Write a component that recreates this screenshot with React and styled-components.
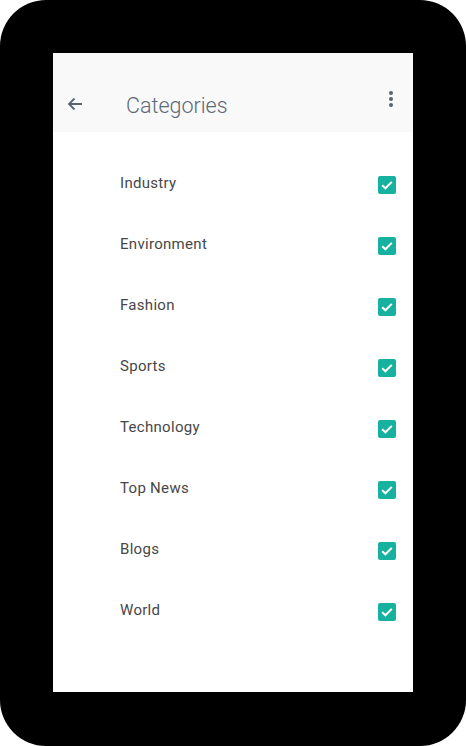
import React from "react";
import styled, { createGlobalStyle } from "styled-components";

const Global = createGlobalStyle`
  html, body { margin: 0; padding: 0; background: #ffffff; }
  body { font-family: Roboto, "Noto Sans", sans-serif; }
`;

const Frame = styled.div`
  width: 466px;
  height: 746px;
  box-sizing: border-box;
  background: #000;
  border-radius: 46px;
  padding: 53px 53px 54px 53px;
`;

const Screen = styled.div`
  width: 360px;
  height: 639px;
  background: #ffffff;
  display: flex;
  flex-direction: column;
`;

const Header = styled.header`
  background: #f9f9f9;
  padding-top: 23px;
  height: 79px;
  box-sizing: border-box;
`;

const Toolbar = styled.div`
  height: 56px;
  display: flex;
  align-items: center;
  padding: 0 10px 0 10px;
`;

const IconButton = styled.div`
  width: 24px;
  height: 24px;
  display: flex;
  align-items: center;
  justify-content: center;
  color: #5a6470;
  margin-top: ${(p) => (p.$raise ? "-10px" : "0")};
`;

const Title = styled.h1`
  margin: 0 0 0 39px;
  flex: 1;
  font-family: Roboto, sans-serif;
  font-weight: 300;
  font-size: 21.5px;
  color: #5d6876;
  padding-top: 3px;
`;

const List = styled.ul`
  list-style: none;
  margin: 0;
  padding: 22px 0 0 0;
`;

const Row = styled.li`
  height: 61px;
  display: flex;
  align-items: center;
  padding: 0 17px 0 67px;
`;

const Label = styled.span`
  flex: 1;
  font-family: Roboto, sans-serif;
  font-size: 15px;
  letter-spacing: 0.3px;
  color: #474747;
  margin-top: -4px;
`;

const Box = styled.span`
  width: 18px;
  height: 18px;
  border-radius: 2px;
  background: #17b1a0;
  display: flex;
  align-items: center;
  justify-content: center;
`;

const BackArrow = () => (
  <svg width="16" height="14" viewBox="0 0 16 14">
    <path d="M15 7H2M7.5 1.5L2 7l5.5 5.5" fill="none" stroke="currentColor" strokeWidth="1.8" />
  </svg>
);

const MoreIcon = () => (
  <svg width="4" height="18" viewBox="0 0 4 18">
    <circle cx="2" cy="3" r="2" fill="#5a6470" />
    <circle cx="2" cy="9" r="2" fill="#5a6470" />
    <circle cx="2" cy="15" r="2" fill="#5a6470" />
  </svg>
);

const Check = () => (
  <Box>
    <svg width="14" height="14" viewBox="0 0 14 14">
      <path d="M2.2 7.2l3.2 3.1 6.4-6.4" fill="none" stroke="#fff" strokeWidth="2" />
    </svg>
  </Box>
);

const categories = ["Industry", "Environment", "Fashion", "Sports", "Technology", "Top News", "Blogs", "World"];

export default function App() {
  return (
    <>
      <Global />
      <Frame>
        <Screen>
          <Header>
            <Toolbar>
              <IconButton><BackArrow /></IconButton>
              <Title>Categories</Title>
              <IconButton $raise><MoreIcon /></IconButton>
            </Toolbar>
          </Header>
          <List>
            {categories.map((c) => (
              <Row key={c}>
                <Label>{c}</Label>
                <Check />
              </Row>
            ))}
          </List>
        </Screen>
      </Frame>
    </>
  );
}
